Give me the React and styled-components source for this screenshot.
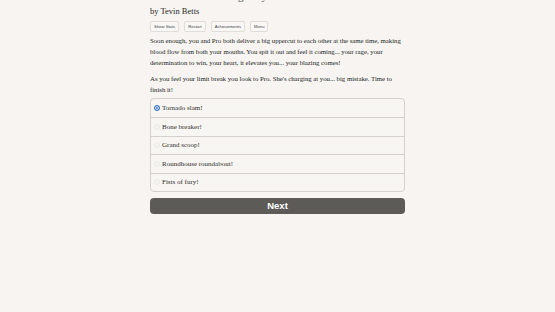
import React, { useState } from "react";
import styled, { createGlobalStyle } from "styled-components";

const Global = createGlobalStyle`
  html, body { margin: 0; padding: 0; background: #f7f4f1; }
  body { font-family: "Liberation Serif", "DejaVu Serif", serif; color: #2a2725; }
  * { box-sizing: border-box; }
`;

const Page = styled.div`
  width: 255px;
  margin: 0 auto;
  height: 312px;
  overflow: hidden;
`;

const Title = styled.h1`
  margin: -10px 0 0;
  font-size: 11px;
  line-height: 12px;
  font-weight: normal;
  color: #555;
`;

const Author = styled.div`
  margin-top: 4px;
  font-size: 8.5px;
  line-height: 11px;
`;

const Toolbar = styled.div`
  display: flex;
  gap: 5px;
  margin-top: 4px;
`;

const SmallButton = styled.button`
  font-family: "Liberation Sans", Arial, sans-serif;
  font-size: 4.2px;
  line-height: 7px;
  padding: 1px 3px;
  background: #f9f8f6;
  border: 1px solid #e0dcd7;
  border-radius: 2px;
  color: #444;
`;

const Paragraph = styled.p`
  margin: 0;
  font-size: 6.8px;
  letter-spacing: -0.03px;
  line-height: 11px;
  color: #221f1d;
  & + & { margin-top: 5px; }
`;

const Body = styled.div`
  margin-top: 3px;
`;

const Choices = styled.div`
  margin-top: 3px;
  border: 1px solid #d4d0cb;
  border-radius: 4px;
  background: #f8f6f3;
  display: flex;
  flex-direction: column;
`;

const Choice = styled.label`
  display: flex;
  align-items: center;
  gap: 2px;
  height: 18.4px;
  padding-left: 3px;
  font-size: 7px;
  color: #2f2c2a;
  border-top: ${(p) => (p.$first ? "none" : "1px solid #d4d0cb")};
`;

const Radio = styled.span`
  width: 6px;
  height: 6px;
  border-radius: 50%;
  display: inline-block;
  background: ${(p) => (p.$checked ? "#3b82d6" : "#f6f4f1")};
  border: ${(p) => (p.$checked ? "1px solid #2f6fbf" : "1px solid #ece9e5")};
  box-shadow: ${(p) => (p.$checked ? "inset 0 0 0 1px #f8f6f3" : "none")};
`;

const NextButton = styled.button`
  margin-top: 6px;
  width: 100%;
  height: 16px;
  border: none;
  border-radius: 4px;
  background: #5d5b58;
  color: #fff;
  font-family: "Liberation Sans", Arial, sans-serif;
  font-weight: bold;
  font-size: 9.5px;
  padding: 0;
`;

const options = [
  "Tornado slam!",
  "Bone breaker!",
  "Grand scoop!",
  "Roundhouse roundabout!",
  "Fists of fury!",
];

export default function App() {
  const [sel, setSel] = useState(0);
  return (
    <>
      <Global />
      <Page>
        <Title>Limit Break: Blazing Fury</Title>
        <Author>by Tevin Betts</Author>
        <Toolbar>
          <SmallButton>Show Stats</SmallButton>
          <SmallButton>Restart</SmallButton>
          <SmallButton>Achievements</SmallButton>
          <SmallButton>Menu</SmallButton>
        </Toolbar>
        <Body>
          <Paragraph>
            Soon enough, you and Pro both deliver a big uppercut to each other at the same time, making
            blood flow from both your mouths. You spit it out and feel it coming... your rage, your
            determination to win, your heart, it elevates you... your blazing comes!
          </Paragraph>
          <Paragraph>
            As you feel your limit break you look to Pro. She's charging at you... big mistake. Time to
            finish it!
          </Paragraph>
        </Body>
        <Choices>
          {options.map((o, i) => (
            <Choice key={o} $first={i === 0} onClick={() => setSel(i)}>
              <Radio $checked={sel === i} />
              {o}
            </Choice>
          ))}
        </Choices>
        <NextButton>Next</NextButton>
      </Page>
    </>
  );
}
